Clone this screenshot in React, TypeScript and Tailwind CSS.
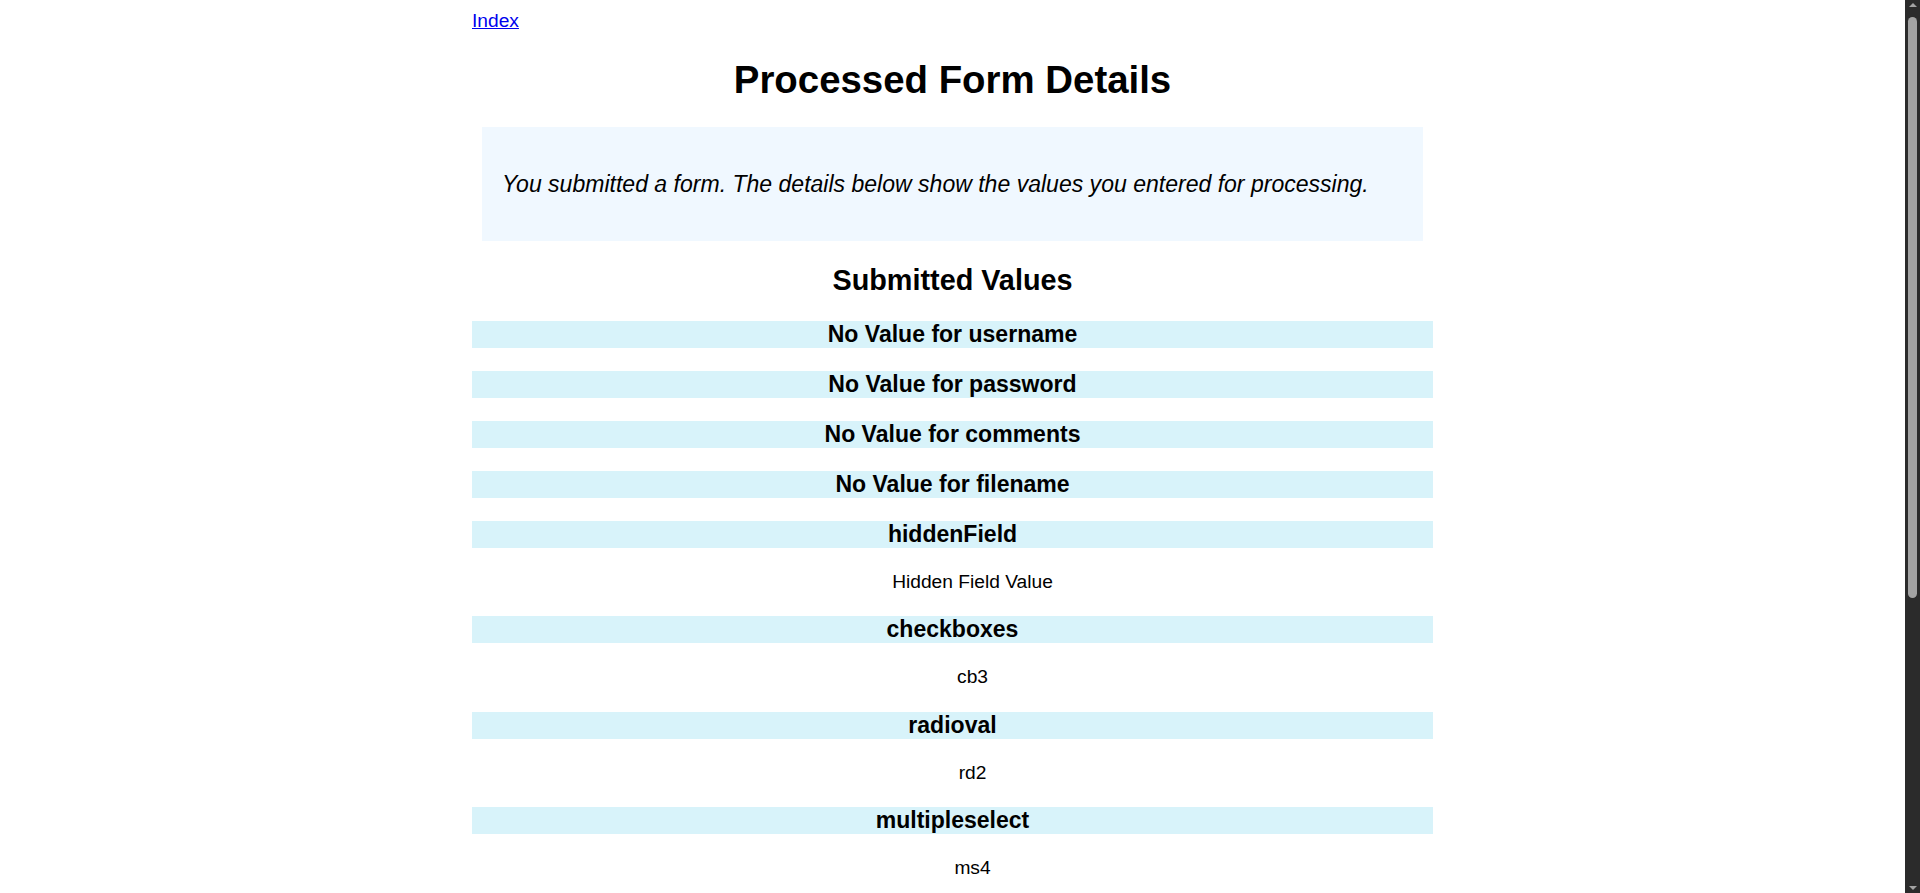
import React from 'react'

type Field = { name: string; value?: string }

const fields: Field[] = [
  { name: 'No Value for username' },
  { name: 'No Value for password' },
  { name: 'No Value for comments' },
  { name: 'No Value for filename' },
  { name: 'hiddenField', value: 'Hidden Field Value' },
  { name: 'checkboxes', value: 'cb3' },
  { name: 'radioval', value: 'rd2' },
  { name: 'multipleselect', value: 'ms4' },
  { name: 'dropdown', value: 'dd3' },
  { name: 'submitbutton', value: 'submit' },
]

// barra de rolagem escura, como no print
function FakeScrollbar() {
  return (
    <div className="fixed top-0 right-0 flex h-screen w-[15px] flex-col items-center bg-[#2b2b2b]">
      <div className="mt-[3px] h-0 w-0 border-x-[4px] border-b-[4px] border-x-transparent border-b-[#a3a3a3]" />
      <div className="mt-[10px] h-[581px] w-[9px] rounded-full bg-[#a3a3a3]" />
      <div className="flex-1" />
      <div className="mb-[3px] h-0 w-0 border-x-[4px] border-t-[4px] border-x-transparent border-t-[#a3a3a3]" />
    </div>
  )
}

export default function App() {
  return (
    <div className="min-h-[1320px] bg-white pt-[10px] pr-[15px] font-['Liberation_Sans',Arial,sans-serif] text-[19.2px] text-black">
      <div className="mx-auto w-[961px]">
        <div className="leading-[22px]">
          <a href="#" className="text-[#0000ee] underline">Index</a>
        </div>

        <h1 className="mt-[26px] mb-[25px] text-center text-[38.4px] font-bold leading-[44px]">
          Processed Form Details
        </h1>

        {/* caixa de explicação */}
        <div className="mx-[10px] bg-[#f0f8ff] px-5 py-5">
          <p className="my-[23.5px] text-[23.04px] italic leading-[26.5px]">
            You submitted a form. The details below show the values you entered for processing.
          </p>
        </div>

        <h2 className="mt-[23px] mb-[24px] text-center text-[28.8px] font-bold leading-[33px]">
          Submitted Values
        </h2>

        {fields.map((f) => (
          <div key={f.name}>
            <h3 className="my-[23px] bg-[#d8f3fa] text-center text-[23.04px] font-bold leading-[27px]">
              {f.name}
            </h3>
            {f.value && (
              <p className="my-[23px] pl-[40px] text-center leading-[22.5px]">{f.value}</p>
            )}
          </div>
        ))}

        <p className="my-[23px] leading-[22px]">
          <a href="#" className="text-[#0000ee] underline">Go back to the form</a>
        </p>
      </div>
      <FakeScrollbar />
    </div>
  )
}
